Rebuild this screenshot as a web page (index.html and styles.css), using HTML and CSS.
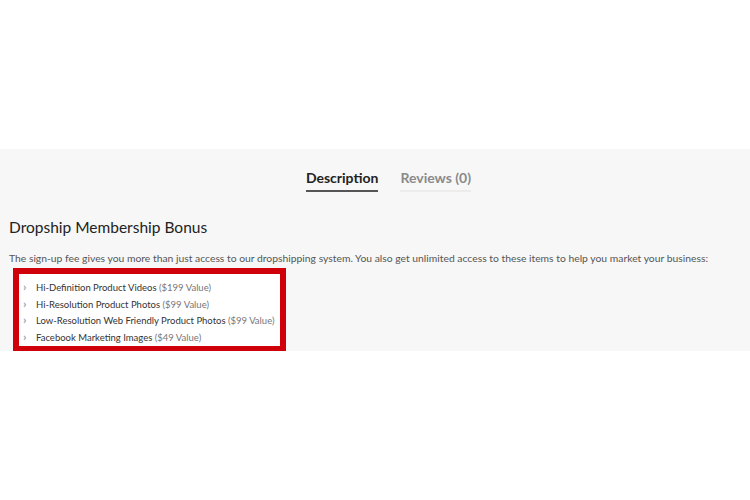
FILE: index.html
```html
<!DOCTYPE html>
<html lang="en">
<head>
  <meta charset="UTF-8" />
  <title>Dropship Membership</title>
  <link rel="stylesheet" href="styles.css">
</head>
<body>
  <div class="spacer"></div>

  <div class="product-tabs">
    <div class="tabs">
      <span class="tab active">Description</span>
      <span class="tab">Reviews (0)</span>
    </div>

    <div class="tab-content">
      <h2 class="heading">Dropship Membership Bonus</h2>
      <p class="intro">The sign-up fee gives you more than just access to our dropshipping system. You also get unlimited access to these items to help you market your business:</p>

      <ul class="bonus-list">
        <li><b>Hi-Definition Product Videos</b> ($199 Value)</li>
        <li><b>Hi-Resolution Product Photos</b> ($99 Value)</li>
        <li><b>Low-Resolution Web Friendly Product Photos</b> ($99 Value)</li>
        <li><b>Facebook Marketing Images</b> ($49 Value)</li>
      </ul>
    </div>
  </div>
</body>
</html>
```

FILE: styles.css
```css
* {
  box-sizing: border-box;
}

body {
  margin: 0;
  background: #fff;
  font-family: Lato, sans-serif;
  color: #555;
}

.spacer {
  height: 149px;
}

.product-tabs {
  background: #f7f7f7;
  height: 202px;
}

.tabs {
  display: flex;
  justify-content: center;
  gap: 22px;
  padding-top: 20px;
  padding-left: 27px;
}

.tab {
  font-size: 14px;
  font-weight: 700;
  color: #8a8a8a;
  padding-bottom: 3px;
  border-bottom: 2px solid #ececec;
  line-height: 18px;
}

.tab.active {
  color: #222;
  border-bottom-color: #555;
}

.tab-content {
  padding: 0 9px;
}

.heading {
  margin: 24px 0 0;
  font-size: 15.5px;
  font-weight: 400;
  color: #222;
  line-height: 22px;
}

.intro {
  margin: 12px 0 0;
  font-size: 10.35px;
  line-height: 16px;
  color: #555;
}

.bonus-list {
  list-style: none;
  margin: 2px 0 0 4px;
  padding: 6px 0 0 0;
  width: 273px;
  border: 6px solid #d0000a;
  background: #fff;
}

.bonus-list li {
  position: relative;
  padding-left: 17px;
  font-size: 9.5px;
  line-height: 16.6px;
  color: #777;
}

.bonus-list li b {
  font-weight: 400;
  color: #333;
}

.bonus-list li::before {
  content: "\203A";
  position: absolute;
  left: 4px;
  top: -1px;
  color: #94a7b5;
  font-size: 12px;
  font-weight: 700;
}
```
